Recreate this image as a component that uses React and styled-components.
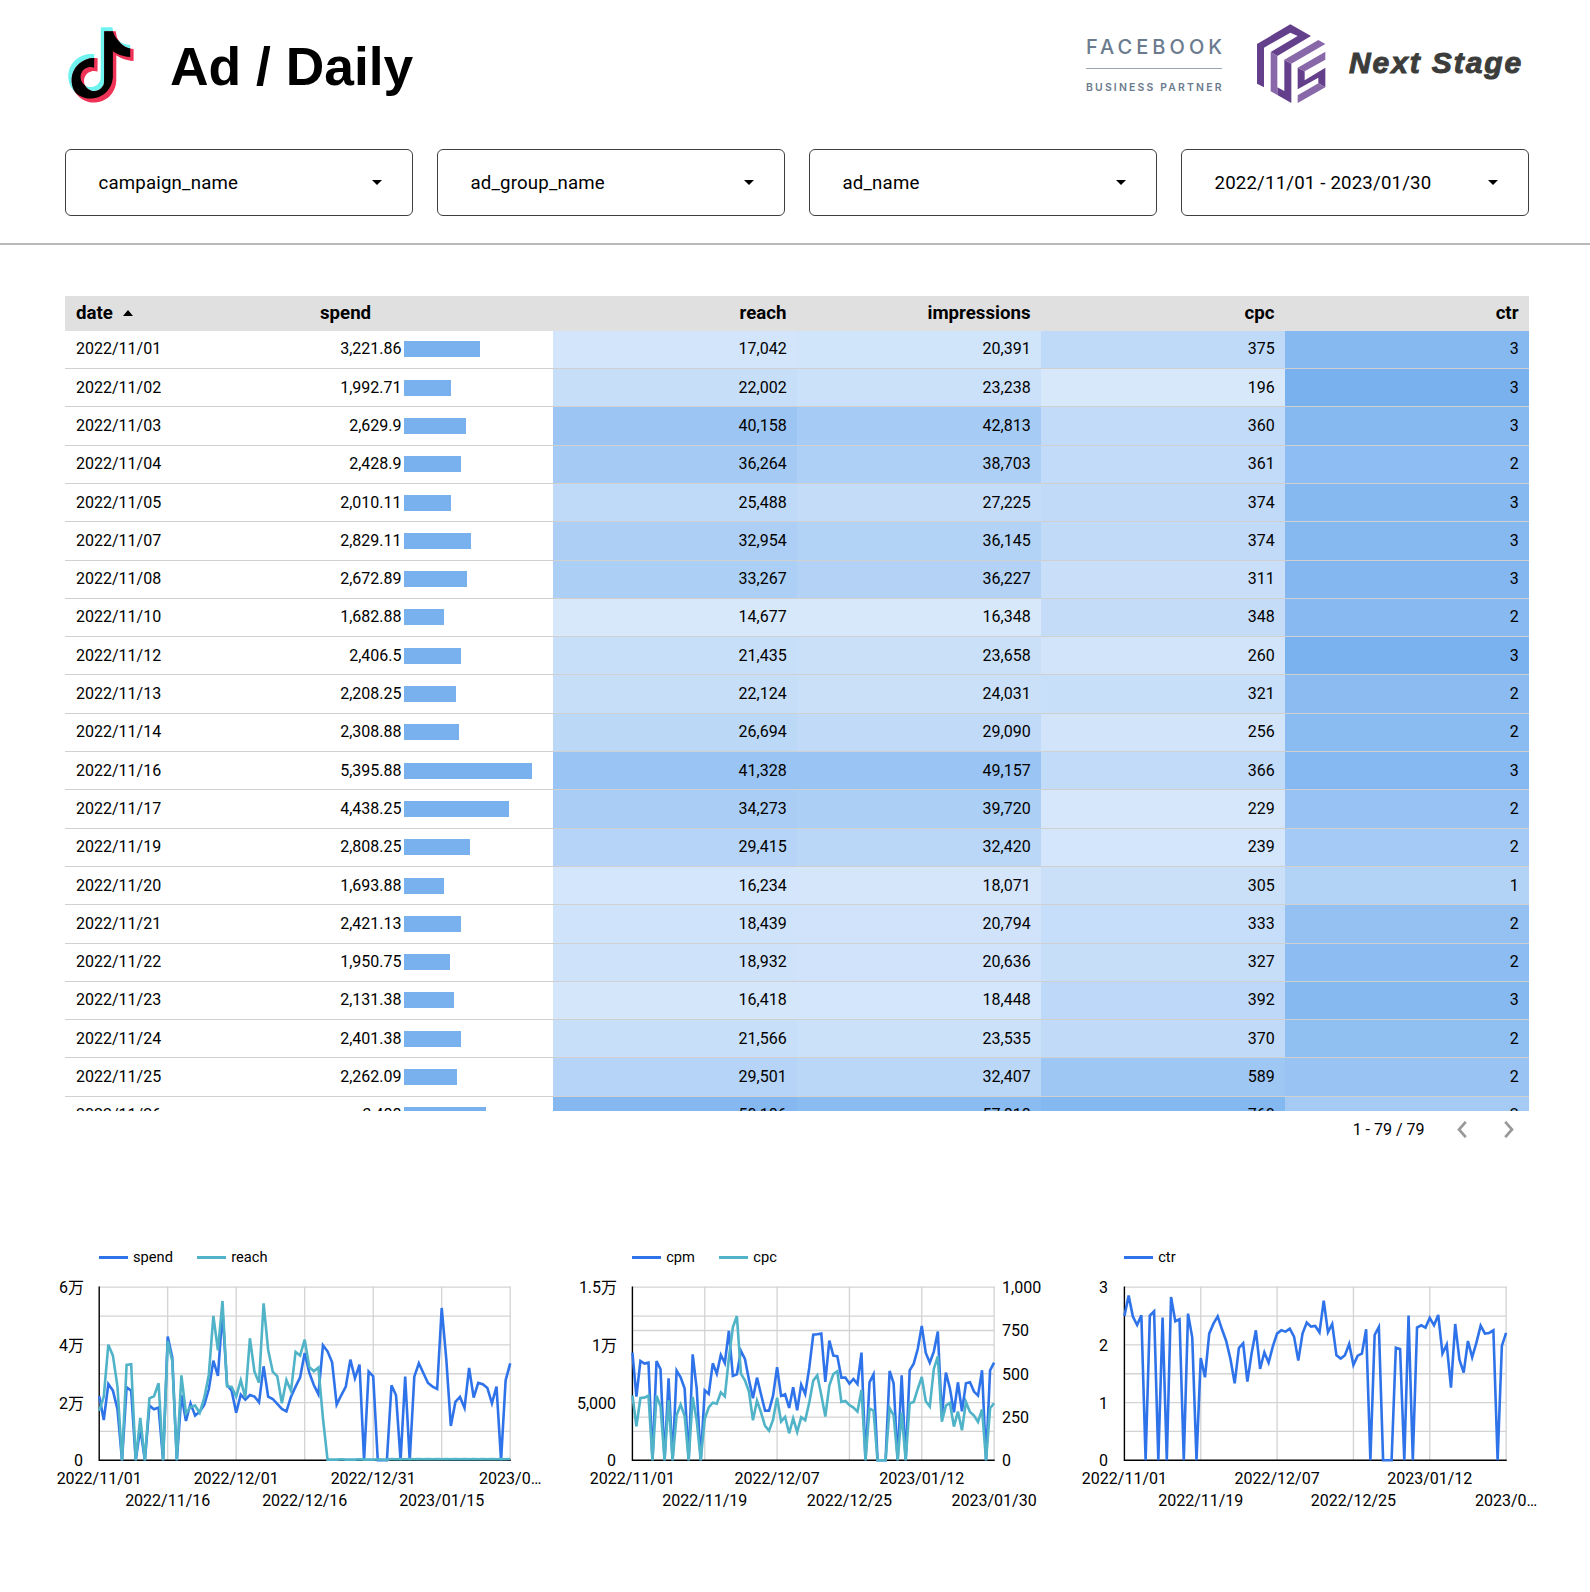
import React from "react";
import styled, { createGlobalStyle } from "styled-components";

const GlobalStyle = createGlobalStyle`
  *, *::before, *::after { box-sizing: border-box; }
  body {
    margin: 0;
    background: #fff;
    color: #000;
    font-family: Roboto, "Noto Sans CJK JP", sans-serif;
    font-size: 16px;
  }
`;

const Page = styled.main`
  width: 1590px;
  height: 1592px;
  overflow: hidden;
  background: #fff;
`;

/* ---------- header ---------- */

const Header = styled.header`
  display: flex;
  align-items: flex-start;
  height: 149px;
  padding: 24px 61px 0 68px;
`;

const TikTokMark = styled.svg`
  width: 68px;
  height: 80px;
  flex: none;
`;

const Title = styled.h1`
  margin: 13px 0 0 34px;
  font: 700 53.4px/60px "Liberation Sans", Arial, sans-serif;
  white-space: nowrap;
`;

const Partners = styled.div`
  display: flex;
  align-items: flex-start;
  margin-left: auto;
`;

const PartnerBadge = styled.div`
  width: 136px;
  margin-top: 10px;
  color: #6b7b8e;
  font-family: Inter, sans-serif;
  white-space: nowrap;
`;

const PartnerName = styled.div`
  height: 35px;
  border-bottom: 1px solid #98a4b3;
  font-size: 20px;
  font-weight: 500;
  line-height: 26px;
  letter-spacing: 4.05px;
`;

const PartnerRole = styled.div`
  margin-top: 12px;
  font-size: 10.4px;
  font-weight: 600;
  line-height: 13px;
  letter-spacing: 2.2px;
`;

const Hexagon = styled.svg`
  width: 69px;
  height: 80px;
  margin-left: 35px;
`;

const Company = styled.div`
  width: 180px;
  margin: 21px 0 0 23px;
  color: #3c3d3b;
  font: italic 700 30px/36px "Liberation Sans", Arial, sans-serif;
  letter-spacing: 1.9px;
  -webkit-text-stroke: 1px #3c3d3b;
  white-space: nowrap;
`;

const NOTE =
  "M12.525.02c1.31-.02 2.61-.01 3.91-.02.08 1.53.63 3.09 1.75 4.17 1.12 1.11 2.7 1.62 4.24 1.79v4.03c-1.44-.05-2.89-.35-4.2-.97-.57-.26-1.1-.59-1.62-.93-.01 2.92.01 5.84-.02 8.75-.08 1.4-.54 2.79-1.35 3.94-1.31 1.92-3.58 3.17-5.91 3.21-1.43.08-2.86-.31-4.08-1.03-2.02-1.19-3.44-3.37-3.65-5.71-.02-.5-.03-1-.01-1.49.18-1.9 1.12-3.72 2.58-4.96 1.66-1.44 3.98-2.13 6.15-1.72.02 1.48-.04 2.96-.04 4.44-.99-.32-2.15-.23-3.02.37-.63.41-1.11 1.04-1.36 1.75-.21.51-.15 1.07-.14 1.61.24 1.64 1.82 3.02 3.5 2.87 1.12-.01 2.19-.66 2.77-1.61.19-.33.4-.67.41-1.06.1-1.79.06-3.57.07-5.36.01-4.03-.01-8.05.02-12.07z";
const CYAN_AT = "translate(-4.4 3.3) scale(2.97)";
const RED_AT = "translate(-1 7.3) scale(2.97)";

function TikTokLogo() {
  return (
    <TikTokMark viewBox="0 0 68 80" aria-label="TikTok">
      <defs>
        <clipPath id="cyan-note">
          <path d={NOTE} transform={CYAN_AT} />
        </clipPath>
      </defs>
      <path d={NOTE} transform={CYAN_AT} fill="#6ff3ee" />
      <path d={NOTE} transform={RED_AT} fill="#ee3357" />
      <g clipPath="url(#cyan-note)">
        <path d={NOTE} transform={RED_AT} fill="#000" />
      </g>
    </TikTokMark>
  );
}

function HexLogo() {
  return (
    <Hexagon viewBox="591 71 207 240" aria-label="Next Stage">
      <g fill="#643f8b">
        <path d="M591 131L691 72L753 107L652 167L632 155L713 107L691 97L612 142V261L591 250Z" />
        <path d="M652 261L673 272V178L694 190V308L652 284Z" />
        <path d="M713 202L734 213V240L796 202V261L775 249V232L713 267Z" />
      </g>
      <g fill="#8868a8">
        <path d="M632 155L652 167V284L632 273Z" />
        <path d="M673 178L775 119L796 131L694 190Z" />
        <path d="M713 202L796 154V178L734 213Z" />
        <path d="M713 285L775 249L796 261L713 308Z" />
      </g>
    </Hexagon>
  );
}

/* ---------- filters ---------- */

const Filters = styled.nav`
  display: grid;
  grid-template-columns: repeat(4, 348px);
  gap: 24px;
  height: 96px;
  padding: 0 65px;
  border-bottom: 2px solid #b9b9b9;
`;

const Filter = styled.button`
  display: flex;
  align-items: center;
  justify-content: space-between;
  height: 67px;
  padding: 0 30px 0 32.5px;
  border: 1px solid #3f3f3f;
  border-radius: 6px;
  background: #fff;
  color: #000;
  font: 400 18.67px/24px Roboto, sans-serif;
  letter-spacing: 0.17px;
`;

const Caret = styled.span`
  width: 0;
  height: 0;
  border: 5px solid transparent;
  border-bottom-width: 0;
  border-top-color: #000;
`;

/* ---------- table ---------- */

const TableBox = styled.section`
  width: 1464px;
  height: 815px;
  margin: 51px 65px 0;
  overflow: hidden;
`;

const HeadRow = styled.div`
  display: grid;
  grid-template-columns: repeat(6, 244px);
  height: 35px;
  background: #e0e0e0;
`;

const HeadCell = styled.div`
  display: flex;
  align-items: center;
  justify-content: ${(p) => (p.$right ? "flex-end" : "flex-start")};
  gap: 10px;
  height: 33px;
  padding: 0 10.5px 0 11px;
  font-size: 18.67px;
  font-weight: 700;
`;

const SortUp = styled.span`
  border: 5px solid transparent;
  border-top-width: 0;
  border-bottom: 6px solid #000;
`;

const Row = styled.div`
  display: grid;
  grid-template-columns: repeat(6, 244px);
  height: ${(p) => (p.$first ? "38.05px" : "38.3px")};
  border-bottom: 1px solid #d0d0d0;
  line-height: 16px;
`;

const Cell = styled.div`
  padding: ${(p) => (p.$first ? "10px" : "10.6px")} 10.3px 0 11px;
  text-align: ${(p) => (p.$right ? "right" : "left")};
  background: ${(p) => p.$fill || "transparent"};
`;

const SpendCell = styled(Cell)`
  display: grid;
  grid-template-columns: 92.5px 1fr;
  column-gap: 2.5px;
  padding-left: 0;
  text-align: right;
`;

const Bar = styled.span`
  height: 16px;
  background: #79b1ef;
`;

const RAMP = [
  [216, 232, 251],
  [121, 177, 239],
];

function shade(value, min, max) {
  const t = Math.max(0, Math.min(1, (value - min) / (max - min)));
  const mix = RAMP[0].map((c, i) => Math.round(c + (RAMP[1][i] - c) * t));
  return `rgb(${mix.join(",")})`;
}

const fmt = (n) => n.toLocaleString("en-US", { maximumFractionDigits: 2 });

// date, spend, reach, impressions, cpc, ctr
const rows = [
  ["2022/11/01", 3221.86, 17042, 20391, 375, 2.5],
  ["2022/11/02", 1992.71, 22002, 23238, 196, 2.85],
  ["2022/11/03", 2629.9, 40158, 42813, 360, 2.5],
  ["2022/11/04", 2428.9, 36264, 38703, 361, 2.35],
  ["2022/11/05", 2010.11, 25488, 27225, 374, 2.51],
  ["2022/11/07", 2829.11, 32954, 36145, 374, 2.5],
  ["2022/11/08", 2672.89, 33267, 36227, 311, 2.58],
  ["2022/11/10", 1682.88, 14677, 16348, 348, 2.47],
  ["2022/11/12", 2406.5, 21435, 23658, 260, 2.83],
  ["2022/11/13", 2208.25, 22124, 24031, 321, 2.41],
  ["2022/11/14", 2308.88, 26694, 29090, 256, 2.44],
  ["2022/11/16", 5395.88, 41328, 49157, 366, 2.54],
  ["2022/11/17", 4438.25, 34273, 39720, 229, 2.12],
  ["2022/11/19", 2808.25, 29415, 32420, 239, 1.77],
  ["2022/11/20", 1693.88, 16234, 18071, 305, 1.44],
  ["2022/11/21", 2421.13, 18439, 20794, 333, 2.19],
  ["2022/11/22", 1950.75, 18932, 20636, 327, 2.37],
  ["2022/11/23", 2131.38, 16418, 18448, 392, 2.5],
  ["2022/11/24", 2401.38, 21566, 23535, 370, 2.27],
  ["2022/11/25", 2262.09, 29501, 32407, 589, 2.06],
  ["2022/11/26", 3488, 50186, 57818, 760, 1.75],
];

function DataTable() {
  return (
    <TableBox>
      <HeadRow>
        <HeadCell>
          date <SortUp />
        </HeadCell>
        <HeadCell>spend</HeadCell>
        {["reach", "impressions", "cpc", "ctr"].map((name) => (
          <HeadCell key={name} $right>
            {name}
          </HeadCell>
        ))}
      </HeadRow>
      {rows.map(([date, spend, reach, impressions, cpc, ctr], i) => {
        const first = i === 0;
        return (
          <Row key={date} $first={first}>
            <Cell $first={first}>{date}</Cell>
            <SpendCell $first={first}>
              {fmt(spend)}
              <Bar style={{ width: Math.round(spend * 0.02363) }} />
            </SpendCell>
            <Cell $right $first={first} $fill={shade(reach, 14677, 55154)}>
              {fmt(reach)}
            </Cell>
            <Cell $right $first={first} $fill={shade(impressions, 16348, 67000)}>
              {fmt(impressions)}
            </Cell>
            <Cell $right $first={first} $fill={shade(cpc, 215, 835)}>
              {cpc}
            </Cell>
            <Cell $right $first={first} $fill={shade(ctr, 0.5, 2.85)}>
              {Math.round(ctr)}
            </Cell>
          </Row>
        );
      })}
    </TableBox>
  );
}

const Pager = styled.div`
  display: flex;
  align-items: center;
  justify-content: flex-end;
  height: 37px;
  padding-right: 76px;
`;

const PagerText = styled.span`
  margin: -1px 32px 0 0;
`;

const Chevron = styled.svg`
  width: 10px;
  height: 17px;
  margin-left: ${(p) => p.$gap || 0}px;
  fill: none;
  stroke: #999;
  stroke-width: 2.7;
`;

/* ---------- charts ---------- */

const Charts = styled.section`
  display: flex;
  height: 300px;
  margin-top: 97px;
`;

const Panel = styled.article`
  width: ${(p) => p.$width}px;
`;

const Legend = styled.div`
  display: flex;
  align-items: center;
  height: 24px;
  padding-left: ${(p) => p.$left}px;
  font-size: 14.67px;
`;

const LegendItem = styled.div`
  display: flex;
  align-items: center;
  gap: 5.3px;
  margin-right: 24px;

  &::before {
    content: "";
    width: 29px;
    height: 3px;
    background: ${(p) => p.$color};
  }
`;

const Plot = styled.svg`
  display: block;
  font: 400 16px Roboto, "Noto Sans CJK JP", sans-serif;
`;

const BLUE = "#2f73ea";
const TEAL = "#50b3c8";

// One sample per day; a sample is a depth in thirds of a pixel, FLOOR being the axis.
const FLOOR = 661;
const TOP = 18.2;
const HEIGHT = 173.1;
const BASE = TOP + HEIGHT;

const SPEND = [468, 540, 432, 452, 508, 661, 442, 452, 661, 565, 661, 497, 508, 503, 661, 290, 352, 661, 465, 543, 490, 527, 515, 495, 448, 362, 408, 215, 435, 452, 518, 464, 479, 465, 470, 487, 379, 470, 477, 492, 507, 514, 470, 440, 412, 339, 398, 435, 463, 316, 334, 367, 494, 466, 440, 359, 415, 374, 661, 395, 409, 661, 661, 661, 436, 466, 661, 410, 661, 410, 370, 400, 429, 440, 447, 204, 357, 558, 486, 471, 504, 384, 473, 429, 433, 444, 490, 440, 661, 421, 370];
const REACH = [513, 470, 314, 347, 440, 661, 375, 373, 661, 534, 661, 475, 469, 430, 661, 303, 364, 661, 406, 520, 501, 497, 519, 474, 405, 228, 331, 183, 439, 441, 470, 421, 473, 295, 395, 428, 190, 330, 395, 409, 490, 420, 453, 336, 347, 299, 381, 394, 383, 535, 659].concat(
  Array.from({ length: 40 }, (_, i) => [659, 659, 658, 659, 657][i > 12 ? (i % 2 ? 4 : 2) : i % 4])
);
const CPM = [338, 470, 363, 371, 368, 661, 363, 388, 661, 415, 661, 392, 412, 446, 661, 343, 446, 661, 451, 462, 370, 401, 345, 369, 273, 408, 403, 333, 357, 419, 475, 413, 463, 512, 512, 467, 382, 468, 463, 504, 442, 511, 434, 462, 384, 284, 283, 281, 426, 302, 347, 349, 413, 413, 431, 417, 432, 338, 661, 427, 403, 661, 661, 661, 393, 430, 661, 406, 661, 391, 371, 327, 258, 339, 368, 335, 275, 530, 398, 445, 517, 427, 514, 430, 427, 455, 467, 391, 661, 391, 368];
const CPC = [466, 559, 474, 473, 467, 661, 467, 499, 661, 480, 661, 526, 494, 528, 661, 471, 542, 661, 537, 502, 488, 491, 457, 469, 355, 262, 228, 401, 421, 455, 541, 482, 517, 558, 572, 539, 473, 545, 531, 580, 535, 576, 532, 541, 488, 422, 406, 465, 530, 437, 402, 394, 486, 483, 495, 503, 515, 450, 661, 506, 512, 661, 661, 661, 504, 526, 661, 518, 661, 490, 486, 447, 411, 484, 500, 387, 349, 545, 497, 489, 560, 515, 571, 486, 516, 527, 546, 508, 661, 505, 490];
const CTR = [228, 167, 230, 255, 226, 661, 227, 214, 661, 233, 661, 171, 244, 238, 661, 221, 293, 661, 354, 412, 281, 251, 229, 268, 303, 357, 430, 324, 310, 425, 340, 271, 387, 337, 368, 319, 281, 271, 275, 266, 290, 362, 281, 248, 260, 258, 277, 182, 277, 252, 346, 356, 346, 312, 375, 347, 341, 268, 661, 285, 261, 661, 661, 661, 323, 327, 661, 227, 661, 263, 256, 263, 234, 256, 225, 341, 314, 443, 252, 359, 398, 303, 352, 308, 257, 281, 279, 271, 661, 318, 279];

function Chart({ width, left, span, series, legend, yLabels, rightLabels = [], xLabels }) {
  const right = left + span;
  const fractions = [0, 1 / 6, 2 / 6, 3 / 6, 4 / 6, 5 / 6];
  if (rightLabels.length) fractions.push(0.25, 0.75);
  const step = span / 90;
  const path = (data) =>
    data
      .map((y, i) => `${(left + i * step).toFixed(2)},${(BASE - (FLOOR - y) / 3).toFixed(2)}`)
      .join(" ");
  const labelY = (i, n) => TOP + (HEIGHT * i) / (n - 1) + 6;
  const tickX = (i) => left + (span * i) / (xLabels.length - 1);
  return (
    <Panel $width={width}>
      <Legend $left={left - 0.5}>
        {legend.map((name, i) => (
          <LegendItem key={name} $color={i ? TEAL : BLUE}>
            {name}
          </LegendItem>
        ))}
      </Legend>
      <Plot width={width} height={260} overflow="visible">
        <g stroke="#d3d3d3" strokeWidth="1.3">
          {fractions.map((f) => (
            <line key={f} x1={left} x2={right + 0.6} y1={TOP + HEIGHT * f} y2={TOP + HEIGHT * f} />
          ))}
          {xLabels.slice(1).map((_, i) => (
            <line key={i} x1={tickX(i + 1)} x2={tickX(i + 1)} y1={TOP - 0.6} y2={BASE} />
          ))}
        </g>
        <path
          d={`M${left} ${TOP - 0.6}V${BASE}H${right + 0.6}`}
          fill="none"
          stroke="#000"
          strokeWidth="1.4"
        />
        {series.map((data, i) => (
          <polyline
            key={i}
            points={path(data)}
            fill="none"
            stroke={i ? TEAL : BLUE}
            strokeWidth="2.6"
          />
        ))}
        {yLabels.map((t, i) => (
          <text
            key={t}
            x={left - (t.includes("万") ? 15.3 : 16.3)}
            y={labelY(i, yLabels.length)}
            textAnchor="end"
          >
            {t}
          </text>
        ))}
        {rightLabels.map((t, i) => (
          <text key={t} x={right + 8} y={labelY(i, rightLabels.length)}>
            {t}
          </text>
        ))}
        {xLabels.map((t, i) => (
          <text key={t} x={tickX(i)} y={BASE + (i % 2 ? 45.5 : 23.7)} textAnchor="middle">
            {t}
          </text>
        ))}
      </Plot>
    </Panel>
  );
}

export default function App() {
  return (
    <Page>
      <GlobalStyle />
      <Header>
        <TikTokLogo />
        <Title>Ad / Daily</Title>
        <Partners>
          <PartnerBadge>
            <PartnerName>FACEBOOK</PartnerName>
            <PartnerRole>BUSINESS PARTNER</PartnerRole>
          </PartnerBadge>
          <HexLogo />
          <Company>Next Stage</Company>
        </Partners>
      </Header>
      <Filters>
        {["campaign_name", "ad_group_name", "ad_name", "2022/11/01 - 2023/01/30"].map((label) => (
          <Filter key={label}>
            {label}
            <Caret />
          </Filter>
        ))}
      </Filters>
      <DataTable />
      <Pager>
        <PagerText>1 - 79 / 79</PagerText>
        <Chevron viewBox="0 0 10 17">
          <path d="M8.8 0.8L2 8.5L8.8 16.2" />
        </Chevron>
        <Chevron viewBox="0 0 10 17" $gap={37.5}>
          <path d="M1.2 0.8L8 8.5L1.2 16.2" />
        </Chevron>
      </Pager>
      <Charts>
        <Chart
          width={550}
          left={99.2}
          span={411}
          series={[SPEND, REACH]}
          legend={["spend", "reach"]}
          yLabels={["6万", "4万", "2万", "0"]}
          xLabels={["2022/11/01", "2022/11/16", "2022/12/01", "2022/12/16", "2022/12/31", "2023/01/15", "2023/0…"]}
        />
        <Chart
          width={510}
          left={82.4}
          span={361.7}
          series={[CPM, CPC]}
          legend={["cpm", "cpc"]}
          yLabels={["1.5万", "1万", "5,000", "0"]}
          rightLabels={["1,000", "750", "500", "250", "0"]}
          xLabels={["2022/11/01", "2022/11/19", "2022/12/07", "2022/12/25", "2023/01/12", "2023/01/30"]}
        />
        <Chart
          width={530}
          left={64.4}
          span={381.7}
          series={[CTR]}
          legend={["ctr"]}
          yLabels={["3", "2", "1", "0"]}
          xLabels={["2022/11/01", "2022/11/19", "2022/12/07", "2022/12/25", "2023/01/12", "2023/0…"]}
        />
      </Charts>
    </Page>
  );
}
